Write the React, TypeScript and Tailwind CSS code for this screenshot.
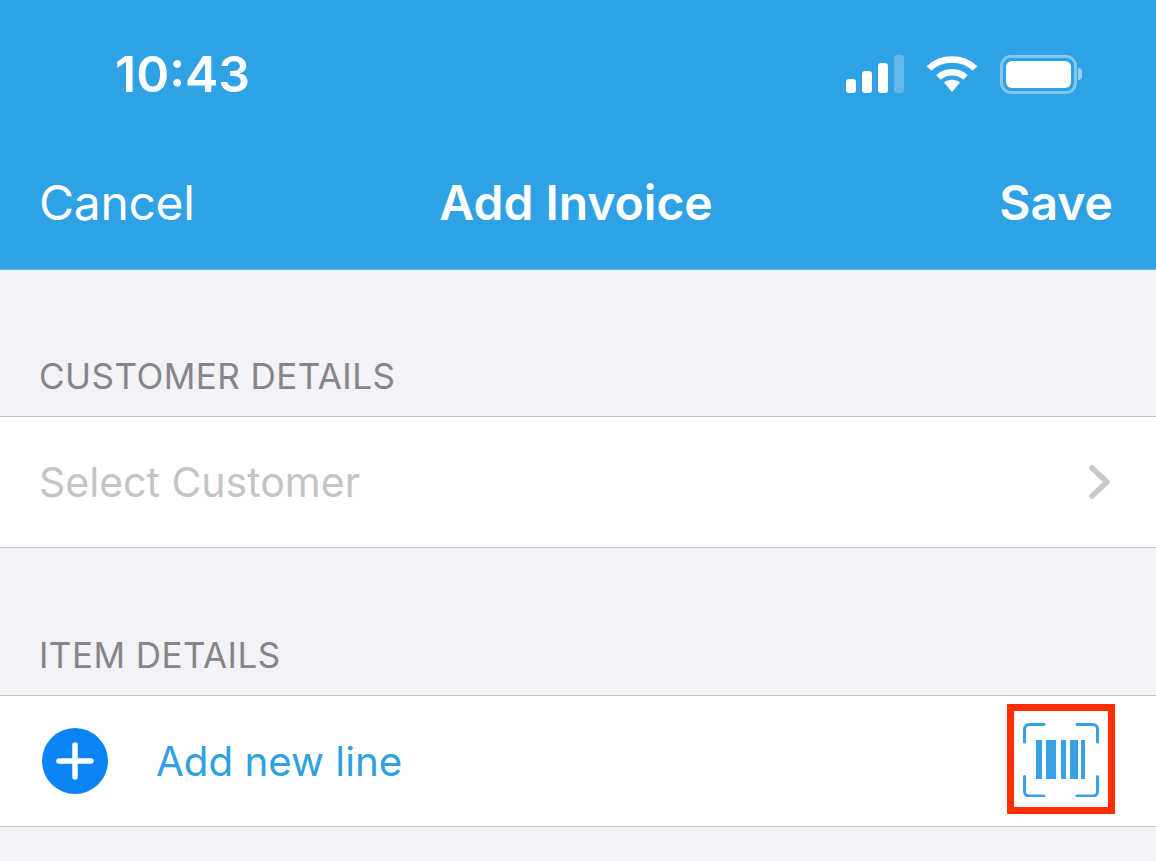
import React from 'react';

const SignalIcon = () => (
  <svg width="58" height="38" viewBox="0 0 58 38" className="block">
    <rect x="0" y="24" width="10" height="14" rx="3" fill="#fff" />
    <rect x="16" y="16" width="10" height="22" rx="3" fill="#fff" />
    <rect x="32" y="8" width="10" height="30" rx="3" fill="#fff" />
    <rect x="48" y="0" width="10" height="38" rx="3" fill="#fff" fillOpacity="0.25" />
  </svg>
);

const WifiIcon = () => (
  <svg width="52" height="38" viewBox="0 0 52 38" className="block">
    <path d="M3 13.500C8.800 7.800 16.800 4.500 26 4.500s17.200 3.300 23 9" fill="none" stroke="#fff" strokeWidth="6.500" strokeLinecap="butt" />
    <path d="M12.500 22.500C16 19.200 20.600 17.300 26 17.300s10 1.900 13.500 5.200" fill="none" stroke="#fff" strokeWidth="6.500" strokeLinecap="butt" />
    <path d="M18 27.500c2.200-1.700 4.900-2.700 8-2.700s5.800 1 8 2.700L26 37z" fill="#fff" />
  </svg>
);

const BatteryIcon = () => (
  <div className="flex items-center">
    <div className="w-[77px] h-[39px] rounded-[11px] border-[3px] border-white/40 p-[3px]">
      <div className="w-full h-full rounded-[6px] bg-white" />
    </div>
    <div className="w-[4px] h-[12px] ml-[1px] rounded-r-full bg-white/50" />
  </div>
);

const ChevronIcon = () => (
  <svg width="24" height="36" viewBox="0 0 24 36" className="block">
    <path d="M4 4l15 14L4 32" fill="none" stroke="#c7c7cc" strokeWidth="5.500" strokeLinecap="round" strokeLinejoin="round" />
  </svg>
);

const PlusIcon = () => (
  <div className="w-[66px] h-[66px] rounded-full bg-[#0a84f5] flex items-center justify-center">
    <svg width="38" height="38" viewBox="0 0 38 38" className="block">
      <path d="M19 3v32M3 19h32" stroke="#fff" strokeWidth="5.500" strokeLinecap="round" />
    </svg>
  </div>
);

const BarcodeIcon = () => (
  <div className="w-[108px] h-[110px] mb-[5px] border-[7px] border-[#ff2d00] flex items-center justify-center">
    <svg width="76" height="76" viewBox="0 0 76 76" className="block">
      <g fill="none" stroke="#38a1e6" strokeWidth="3" strokeLinecap="round">
        <path d="M1.500 21V8a4.500 4.500 0 0 1 4.500-4.500h15" />
        <path d="M54 3.500h16a4.500 4.500 0 0 1 4.500 4.500v13" />
        <path d="M1.500 55.500V70.500a4.500 4.500 0 0 0 4.500 4.500h15" />
        <path d="M54 75h16a4.500 4.500 0 0 0 4.500-4.500V55.500" />
      </g>
      <g fill="#38a1e6">
        <rect x="13" y="19" width="6" height="39" />
        <rect x="23" y="19" width="10" height="39" />
        <rect x="38" y="19" width="5" height="39" />
        <rect x="47" y="19" width="8" height="39" />
        <rect x="58" y="19" width="4" height="39" />
      </g>
    </svg>
  </div>
);

const SectionLabel: React.FC<{ label: string; className: string }> = ({ label, className }) => (
  <div className={`pl-[39px] text-[35px] leading-[40px] text-[#85858b] tracking-[0.45px] ${className}`}>{label}</div>
);

export default function App() {
  return (
    <div className="w-[1156px] h-[861px] overflow-hidden bg-[#f2f2f7] font-['Inter',sans-serif]">
      <header className="h-[270px] bg-[#2fa2e6] border-b border-[#c6c6c8]/40 text-white">
        <div className="flex items-center justify-between pt-[52px] pl-[115px] pr-[74px] h-[96px]">
          <span className="text-[50px] leading-[44px] font-semibold">10:43</span>
          <div className="flex items-center gap-[22px]">
            <SignalIcon />
            <WifiIcon />
            <BatteryIcon />
          </div>
        </div>
        <div className="grid grid-cols-3 items-center pl-[39px] pr-[43px] mt-[79px] h-[56px] text-[48px] leading-[56px]">
          <span className="font-normal tracking-[-0.3px]">Cancel</span>
          <span className="font-semibold text-center whitespace-nowrap">Add Invoice</span>
          <span className="font-semibold text-right">Save</span>
        </div>
      </header>

      <SectionLabel label="CUSTOMER DETAILS" className="pt-[86px] pb-[20px]" />
      <div className="h-[132px] bg-white border-y border-[#c6c6c8] flex items-center justify-between pl-[39px] pr-[44px]">
        <span className="pt-[2px] text-[41px] text-[#c4c4c7]">Select Customer</span>
        <ChevronIcon />
      </div>

      <SectionLabel label="ITEM DETAILS" className="pt-[87px] pb-[20px]" />
      <div className="h-[132px] bg-white border-y border-[#c6c6c8] flex items-center pl-[42px] pr-[41px]">
        <PlusIcon />
        <span className="ml-[48px] pt-[2px] text-[40.300px] text-[#2fa0e2] flex-1">Add new line</span>
        <BarcodeIcon />
      </div>
    </div>
  );
}
